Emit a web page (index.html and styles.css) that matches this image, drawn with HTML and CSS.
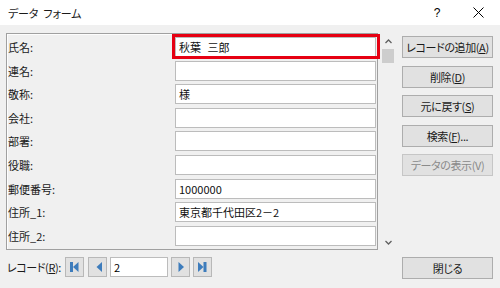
FILE: index.html
```html
<!DOCTYPE html>
<html lang="ja">
<head>
<meta charset="utf-8">
<title>データ フォーム</title>
<link rel="stylesheet" href="styles.css">
</head>
<body>
<div class="titlebar">
  <span class="title">データ フォーム</span>
  <span class="help">?</span>
  <span class="close">
    <svg width="11" height="11" viewBox="0 0 11 11"><path d="M0.5 0.5 L10.5 10.5 M10.5 0.5 L0.5 10.5" stroke="#000" stroke-width="1" fill="none"/></svg>
  </span>
</div>
<div class="content">
  <div class="main">
    <div class="formarea">
      <div class="panel">
        <label class="lbl">氏名:</label>
        <div class="field first"><span class="val name">秋葉 三郎</span><span class="highlight"></span></div>
        <label class="lbl">連名:</label>
        <div class="field"></div>
        <label class="lbl">敬称:</label>
        <div class="field"><span class="val">様</span></div>
        <label class="lbl">会社:</label>
        <div class="field"></div>
        <label class="lbl">部署:</label>
        <div class="field"></div>
        <label class="lbl">役職:</label>
        <div class="field"></div>
        <label class="lbl">郵便番号:</label>
        <div class="field"><span class="val">1000000</span></div>
        <label class="lbl">住所_1:</label>
        <div class="field"><span class="val">東京都千代田区2－2</span></div>
        <label class="lbl">住所_2:</label>
        <div class="field"></div>
      </div>
      <div class="scrollbar">
        <div class="arrow">
          <svg width="7" height="5" viewBox="0 0 7 5"><path d="M0.5 4 L3.5 1 L6.5 4" stroke="#606060" stroke-width="1.3" fill="none"/></svg>
        </div>
        <div class="thumb"></div>
        <div class="track"></div>
        <div class="arrow">
          <svg width="7" height="5" viewBox="0 0 7 5"><path d="M0.5 1 L3.5 4 L6.5 1" stroke="#606060" stroke-width="1.3" fill="none"/></svg>
        </div>
      </div>
    </div>
    <div class="nav">
      <span class="navlabel">レコード(<u>R</u>):</span>
      <div class="navbtn">
        <svg width="19" height="20" viewBox="0 0 19 20"><rect x="5" y="5" width="3" height="10" fill="#3d7cbc"/><path d="M13.5 5 L8 10 L13.5 15 Z" fill="#3d7cbc"/></svg>
      </div>
      <div class="navbtn gap3">
        <svg width="19" height="20" viewBox="0 0 19 20"><path d="M14 5 L8.5 10 L14 15 Z" fill="#3d7cbc"/></svg>
      </div>
      <div class="recbox gap3">2</div>
      <div class="navbtn gap3">
        <svg width="19" height="20" viewBox="0 0 19 20"><path d="M7.5 5 L13 10 L7.5 15 Z" fill="#3d7cbc"/></svg>
      </div>
      <div class="navbtn">
        <svg width="19" height="20" viewBox="0 0 19 20"><path d="M5 5 L10.5 10 L5 15 Z" fill="#3d7cbc"/><rect x="10.5" y="5" width="3" height="10" fill="#3d7cbc"/></svg>
      </div>
    </div>
  </div>
  <div class="buttons">
    <div class="btn">レコードの追加(<u>A</u>)</div>
    <div class="btn">削除(<u>D</u>)</div>
    <div class="btn">元に戻す(<u>S</u>)</div>
    <div class="btn">検索(<u>F</u>)...</div>
    <div class="btn disabled">データの表示(V)</div>
    <div class="btn closebtn">閉じる</div>
  </div>
</div>
</body>
</html>
```

FILE: styles.css
```css
* {
  box-sizing: border-box;
  margin: 0;
  padding: 0;
}

body {
  width: 500px;
  height: 288px;
  overflow: hidden;
  background: #f0f0f0;
  color: #000;
  font-family: "Noto Sans CJK JP", "Noto Sans", sans-serif;
  font-size: 11px;
  line-height: 14px;
  font-feature-settings: "palt";
}

.titlebar {
  height: 25px;
  background: #fff;
  display: flex;
  align-items: center;
  padding-left: 8px;
  padding-right: 12px;
}

.title {
  flex: 1;
  font-size: 11px;
  color: #1a1a1a;
  word-spacing: 3px;
  letter-spacing: -0.2px;
}

.help {
  width: 20px;
  text-align: center;
  font-size: 12px;
  font-family: "Liberation Sans", sans-serif;
  margin-right: 21px;
}

.close {
  width: 20px;
  display: flex;
  justify-content: center;
  align-items: center;
}

.content {
  display: flex;
  height: 263px;
  padding: 8px 7px 0 6px;
}

.main {
  display: flex;
  flex-direction: column;
}

.formarea {
  display: flex;
}

.panel {
  width: 372px;
  height: 217px;
  border: 1px solid #a0a0a0;
  box-shadow: inset 1px 1px 0 #fdfdfd;
  padding: 3px 0 0 1px;
  display: grid;
  grid-template-columns: 167px 201px;
  grid-auto-rows: 20px;
  row-gap: 3.6px;
  align-content: start;
}

.lbl {
  align-self: center;
  color: #1a1a1a;
}

.field {
  position: relative;
  background: #fff;
  border: 1px solid #bcbcbc;
  padding-left: 3px;
  display: flex;
  align-items: center;
}

.val {
  color: #111;
}

.val.name {
  word-spacing: 4px;
}

.highlight {
  position: absolute;
  left: -4px;
  top: -4px;
  right: -5px;
  bottom: -3px;
  border: 3px solid #e60012;
}

.scrollbar {
  margin-left: 4px;
  width: 12px;
  height: 217px;
  display: flex;
  flex-direction: column;
}

.arrow {
  height: 16px;
  display: flex;
  align-items: center;
  justify-content: center;
}

.thumb {
  height: 14px;
  background: #cdcdcd;
}

.track {
  flex: 1;
}

.nav {
  margin-top: 7px;
  display: flex;
  align-items: center;
  height: 20px;
}

.navlabel {
  width: 59px;
  padding-left: 1px;
  color: #1a1a1a;
  letter-spacing: -0.4px;
}

.navbtn {
  width: 19px;
  height: 20px;
  background: #e1e1e1;
  border: 1px solid #b8b8b8;
  margin-right: 4px;
  display: flex;
}

.navbtn svg {
  margin: -1px;
}

.gap3 {
  margin-right: 3px;
}

.recbox {
  width: 58px;
  height: 20px;
  background: #fff;
  border: 1px solid #bcbcbc;
  padding-left: 3px;
  display: flex;
  align-items: center;
}

.buttons {
  margin-left: 8px;
  width: 91px;
  display: flex;
  flex-direction: column;
  gap: 7.5px;
  padding: 3px 0 9px;
}

.btn {
  height: 22px;
  background: #e1e1e1;
  border: 1px solid #adadad;
  display: flex;
  align-items: center;
  justify-content: center;
  color: #1a1a1a;
  letter-spacing: -0.4px;
}

.btn.disabled {
  border-color: #c6c6c6;
  color: #8a8a8a;
}

.btn.closebtn {
  margin-top: auto;
}

u {
  text-underline-offset: 1px;
}
```
